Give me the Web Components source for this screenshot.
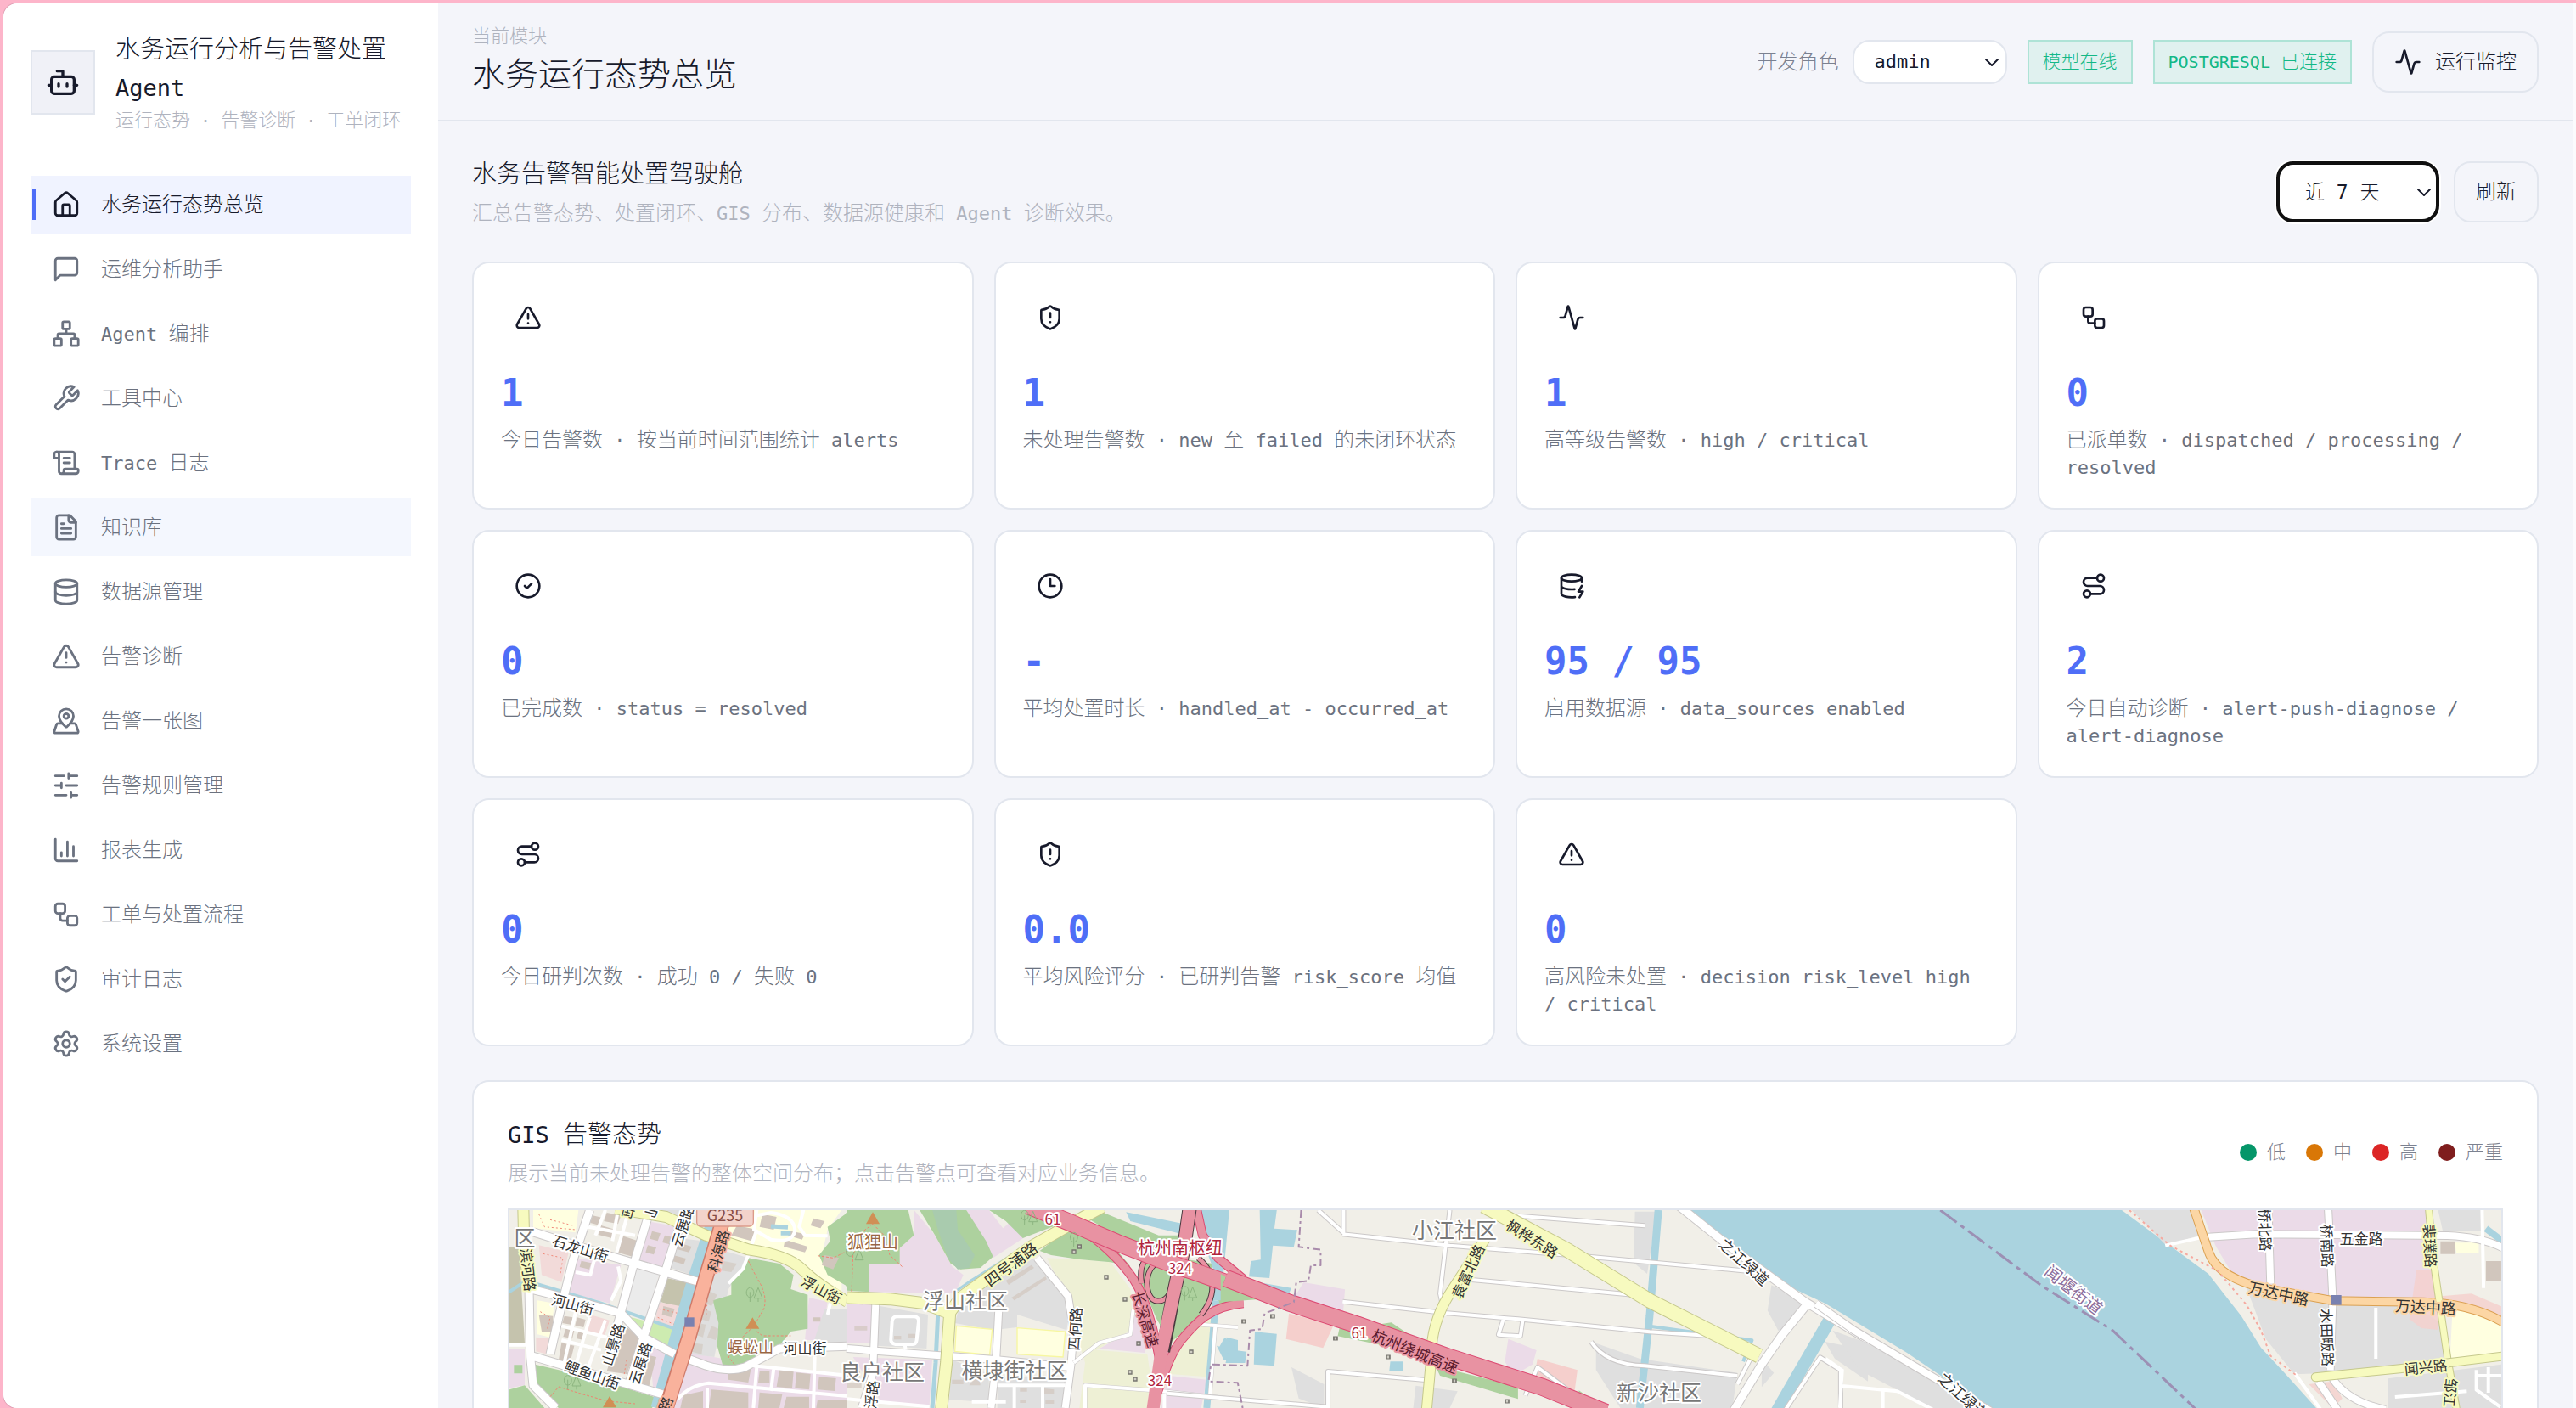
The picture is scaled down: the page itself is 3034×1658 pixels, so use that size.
<!DOCTYPE html>
<html lang="zh-CN">
<head>
<meta charset="utf-8">
<meta name="viewport" content="width=device-width, initial-scale=1">
<title>水务运行分析与告警处置 Agent</title>
<style>
  html, body { margin: 0; height: 100%; }
  body {
    --ink: #171a2b; --body: #6b7280; --muted: #afb3be; --line: #e2e6ee;
    --page: #f4f5fa; --accent: #4f6ef7;
    background: #fdb5ca; color: var(--ink); overflow: hidden;
    font: 300 24px/32px "DejaVu Sans Mono", "Noto Sans CJK SC", monospace;
  }
</style>
</head>
<body>
<water-app></water-app>

<template id="map-art">
  <svg class="map" viewBox="600 1425 2346 760" preserveAspectRatio="xMinYMin slice" role="img" aria-label="告警地图">
    <rect x="600" y="1425" width="2346" height="760" fill="#f1efe8"/>
    <path class="water" d="M1989 1425L2075 1500L2150 1535L2246 1593L2342 1658L2500 1800H2800L2728 1658L2691 1617L2663 1587L2640 1550L2601 1500L2556 1467L2499 1425Z"/>
    <!-- western blocks -->
    <g transform="matrix(.33333 0 0 .33333 598 1418)">
      <path class="lilac" d="M240 190L400 215L360 350L205 310ZM490 60L605 80L550 235L450 200ZM500 500L900 570L1200 600V720H520ZM1065 330L1130 345L1110 480L1050 480ZM5 510H60V640L5 650Z"/>
      <path class="grey" d="M600 120L690 130L650 250L560 220ZM1120 370H1200V490H1080ZM750 160L850 190L780 300L730 540L650 530L700 300ZM440 20H620L600 60Z"/>
      <path class="khaki" d="M5 150H40L60 490H5ZM565 262L650 280L620 370L540 345Z"/>
      <path fill="#ebebeb" d="M455 225L535 245L490 400L412 372Z"/>
      <path class="sand" d="M90 20H250L240 100L90 85ZM760 60L860 20H1180L1130 90L1110 180L1180 260V330L1100 260L960 175L780 130ZM105 340L165 350L150 470L105 460Z"/>
      <path class="pink" d="M110 145L215 170L190 275L120 250ZM530 345L610 360L590 440L522 418ZM290 390L360 410L340 470L280 450ZM100 470L160 475L140 530L100 520Z"/>
      <path class="green" d="M850 190L960 210L1010 250L1000 300L1060 320V440L1000 450L960 500L850 570H760L740 500L745 420L725 340L790 320V280ZM1200 30L1130 80L1140 130L1100 180L1130 250L1200 290ZM90 565L200 590L420 650L530 685L510 720H180L100 640ZM5 655L60 640L130 720H5ZM22 568H52V598H22Z"/>
      <path fill="#cdebb0" d="M420 395L590 440L565 520L480 470Z"/>
      <path class="bld" d="M400 110L460 130L440 185L388 170ZM350 30L400 40L390 70L340 60ZM300 40L335 48L325 75L292 66ZM330 75L380 90L368 120L320 108ZM510 95L540 103L530 130L502 122ZM555 110L580 116L572 142L546 135ZM495 145L525 153L516 178L487 170ZM600 135L650 150L640 170L595 158ZM585 180L630 192L622 212L578 200ZM260 200L295 208L288 230L254 222ZM400 420L470 470L420 600L350 590ZM480 530L525 540L495 660L450 640ZM200 395L230 400L222 425L193 420ZM245 400L275 408L268 435L238 428ZM205 440L235 447L228 475L196 468ZM250 450L275 458L268 480L242 474ZM190 490L235 500L220 560L180 550ZM110 390L160 395V450H120ZM810 75L880 90L860 130L790 110ZM900 35L950 45L940 90L890 80ZM1000 95L1050 105L1040 125L990 110ZM980 125L1060 150L1050 170L975 150ZM1080 50L1120 60L1105 85L1070 75ZM1120 180L1170 190L1150 230L1110 215ZM780 590L860 580L850 630L780 620ZM890 590H925V630H885ZM960 585L1010 590L1005 650L950 645ZM1020 595L1070 600L1065 655L1015 650ZM1100 610L1160 615L1155 660L1095 655ZM720 655L850 665V720H710ZM890 665L970 672L960 720H885ZM985 680H1065V720H975ZM1095 690H1200V720H1090ZM620 675L690 660V720H610ZM1080 400H1105V415H1080ZM550 360L590 370L580 400L545 390Z"/>
      <path class="bld" opacity=".6" d="M700 300L740 320L720 360L690 345ZM690 370L720 380L710 415L680 405ZM670 420L700 425L690 470L660 460ZM720 430L745 440L735 480L705 470ZM650 490L690 495L685 530L645 520ZM760 200L810 210L790 240L755 235Z"/>
      <path class="ln" stroke="#f08a7a" stroke-width="1" stroke-dasharray="2 3" d="M110 35L130 80L240 90M150 55L230 75M125 175L195 190L185 250M535 370L600 385M530 400L590 425M115 380L150 400L140 440M705 340L700 410M420 550L410 610"/>
      <path class="wl" stroke-width="13" d="M722 60L650 280L590 480L525 720"/>
      <path class="wl" stroke-width="4" d="M5 310L50 280L90 278L330 350L590 440"/>
      <path class="wl" stroke-width="5" d="M930 78L990 82M965 103L1000 103"/>
      <path class="case" stroke-width="11" d="M80 95L350 180L670 273M75 300L80 540L90 640L170 720M75 298L200 330L400 385L480 470L590 530M620 540L700 570Q780 595 840 575L960 510L1200 502M80 535L300 600L560 675M290 20L230 200L180 400L150 530M500 30L440 230L395 400L350 560M630 20L600 100L550 260L480 470L430 630"/>
      <path class="road" stroke-width="9" d="M80 95L350 180L670 273M75 300L80 540L90 640L170 720M75 298L200 330L400 385L480 470L590 530M620 540L700 570Q780 595 840 575L960 510L1200 502M80 535L300 600L560 675M290 20L230 200L180 400L150 530M500 30L440 230L395 400L350 560M630 20L600 100L550 260L480 470L430 630"/>
      <path class="road" stroke-width="4" d="M880 20L870 90L930 125Q1010 140 1015 90Q1010 40 930 30L880 40M1045 20L1030 80L1050 110L1130 112M880 90L850 180L830 230L780 280M860 570L1200 605M880 575L868 720M940 580L930 660M1085 540L1080 720M600 690Q640 640 710 632L900 650L1200 678M705 650V720M5 497H80M390 20L370 130M345 20L310 110M420 50L385 170M285 80L450 110M240 240L292 250L305 200M390 220L400 270L365 340M190 430L350 470M240 380L200 560M290 400L240 570M345 410L280 590M190 480L330 515M1130 390L1140 350"/>
      <path class="ycase" stroke-width="14" d="M380 15L560 45L700 110L850 160Q990 180 1040 230T1200 345M55 15L58 150L76 305"/>
      <path class="yroad" stroke-width="12" d="M380 15L560 45L700 110L850 160Q990 180 1040 230T1200 345M55 15L58 150L76 305"/>
      <path class="ln" stroke="#cf7c6b" stroke-width="18" d="M765 40L700 260L640 470L560 720"/>
      <path class="ln" stroke="#f9b29c" stroke-width="15" d="M765 40L700 260L640 470L560 725"/>
      <rect x="668" y="-20" width="200" height="98" rx="14" fill="#f3d3cb" stroke="#dc9a8a" stroke-width="4"/>
      <rect x="625" y="400" width="34" height="34" fill="#7981b0"/>
      <path class="trail" d="M850 200L880 260Q920 320 905 370L870 430L830 470L780 540L800 565M880 450L900 465H1000M1095 182L1150 190L1200 165M150 680L180 645L260 670L350 695L450 705"/>
      <path fill="#d08f55" d="M865 400L889 440H841ZM360 678L384 718H336Z"/>
      <path class="tree" d="M856 295a13 17 0 1 0 1 0M856 345V310M885 295L870 332H900ZM885 345V332M212 605a13 17 0 1 0 1 0M212 655V620M243 605L228 642H258ZM243 655V642"/>
      <rect x="26" y="86" width="62" height="60" fill="#fff" opacity=".7"/>
    </g>
    <!-- hill district and interchange -->
    <g transform="matrix(.33333 0 0 .33333 998 1418)">
      <path class="lilac" d="M235 20L310 110L370 220L410 250L380 315L75 310V210H180V160L235 110ZM420 20H500L550 85L590 50L630 115L515 190ZM0 350H90V490H0ZM20 540L300 550L290 710L120 700ZM1010 370L1060 500L1050 525L890 510L1000 450ZM1130 605L1270 620L1250 720H1110Z"/>
      <path class="grey" d="M115 360L285 390L280 510L105 500ZM660 190L790 350L775 445L600 390V435L515 445L380 420L400 350L470 300ZM370 550L500 600V700L360 690ZM530 610H770L760 720H530Z"/>
      <path class="sand" stroke="#f7f7a0" stroke-width="4" d="M385 430L512 442L503 532L380 520ZM600 437L770 450L762 540L600 530Z"/>
      <path fill="#eef0d5" d="M705 190L820 195L930 205L1000 300L1010 440L880 515L1060 530L1070 600L1060 720H820L840 560L790 400L770 320ZM1150 480L1290 400L1270 610L1140 600Z"/>
      <path class="green" d="M0 20H215L235 110L185 155V212H75V310L0 305ZM255 20H420L490 130L515 185L470 225L400 230L365 210L310 110ZM500 20H660L770 62L620 120L560 60ZM680 165L790 80L950 160L1000 220L930 205L820 195L720 180ZM850 50L900 28L1100 110L1180 110L1160 150L1030 160ZM1050 170L1290 210V340L1250 400L1140 490L1090 400L1040 280ZM1310 330L1380 310V330L1300 370Z"/>
      <path fill="#a9cbae" d="M300 20H385L390 90L450 180L430 225L390 230L355 190L320 90Z"/>
      <path class="water" d="M1245 20H1350L1320 340H1285L1300 250L1250 110ZM985 28L1190 70L1180 105L1000 60ZM1340 470L1380 480V560L1330 550L1305 500L1340 510Z"/>
      <path class="bld" opacity=".7" d="M560 270L650 215L660 225L570 285ZM580 330L700 255L705 265L590 340ZM165 465H190V478H165ZM215 458H240V472H215ZM25 432H70V446H25ZM370 620H410V636H370ZM430 640L465 600L470 640ZM610 650H635V662H610ZM690 650L730 655V670H690ZM610 690H630V702H610ZM700 690H730V705H700ZM0 590H45V610H0ZM0 630H50V650H0Z"/>
      <path class="wl" stroke-width="3" d="M770 62L440 268L380 310"/>
      <path class="wl" stroke-width="5" d="M320 390L312 560L300 720"/>
      <path class="wl" stroke-width="8" d="M1302 340L1270 720"/>
      <path class="case" stroke-width="10" d="M100 350L90 600L50 720M0 510L100 518L370 538L530 550L780 575M535 370L525 560L508 720M670 190L780 325L800 450L790 570L770 720"/>
      <path class="road" stroke-width="8" d="M100 350L90 600L50 720M0 510L100 518L370 538L530 550L780 575M535 370L525 560L508 720M670 190L780 325L800 450L790 570L770 720"/>
      <path class="case" stroke-width="5" d="M800 560L890 490L1000 460L1010 370M840 720V640L1110 660L1380 690M1300 430L1280 690M1250 425L1380 435"/>
      <path class="road" stroke-width="4" d="M175 397H235Q253 397 252 415L245 480Q244 497 225 495H170Q152 493 154 475L158 415Q160 397 175 397ZM203 495L206 515M800 560L890 490L1000 460L1010 370M840 720V640L1110 660L1380 690M0 688L290 715M530 640H770M590 640V720M690 640V720M440 698H560M1120 720V668M1300 430L1280 690M1250 425L1380 435"/>
      <path class="ycase" stroke-width="15" d="M0 330L150 335L270 350L360 385L400 330L650 150L790 70L900 10M362 385L350 560L332 725"/>
      <path class="yroad" stroke-width="13" d="M0 330L150 335L270 350L360 385L400 330L650 150L790 70L900 10M362 385L350 560L332 725"/>
      <path class="mcase" stroke-width="11" d="M860 110Q1000 220 1040 320T1105 560M1235 20L1255 110L1310 190L1400 265M1400 350C1280 360 1230 420 1180 480C1140 530 1120 600 1090 680"/>
      <path class="mroad" stroke-width="9" d="M860 110Q1000 220 1040 320T1105 560M1235 20L1255 110L1310 190L1400 265M1400 350C1280 360 1230 420 1180 480C1140 530 1120 600 1090 680"/>
      <path class="ln" stroke="#4b3a40" stroke-width="7" d="M1150 205C1040 170 1040 340 1095 342C1140 345 1150 290 1155 260M1040 280Q1025 190 1090 180M1240 190C1310 250 1300 330 1250 390"/>
      <path class="mroad" stroke-width="5" d="M1150 205C1040 170 1040 340 1095 342C1140 345 1150 290 1155 260M1040 280Q1025 190 1090 180M1240 190C1310 250 1300 330 1250 390"/>
      <path class="ln" stroke="#4b3a40" stroke-width="17" d="M1210 10L1190 150L1150 330L1115 520"/>
      <path class="mroad" stroke-width="15" d="M1210 10L1190 150L1150 330L1110 520L1080 725"/>
      <path class="mcase" stroke-width="21" d="M640 5L780 62L950 135L1130 205L1260 250L1400 300"/>
      <path class="mroad" stroke-width="19" d="M640 5L780 62L950 135L1130 205L1260 250L1400 300"/>
      <g fill="#cfcdc4" stroke="#77756f" stroke-width="4"><path d="M795 162h12v12h-12ZM814 144h12v12h-12ZM909 252h12v12h-12ZM975 330h12v12h-12ZM1023 486h12v12h-12ZM1209 516h12v12h-12ZM993 588h12v12h-12ZM1011 612h12v12h-12Z"/></g>
      <path class="trail" d="M90 70L50 100L20 180L15 310M90 70L130 110L150 180L195 222"/>
      <path fill="#d08f55" d="M90 28L114 70H66Z"/>
      <path class="tree" d="M626 22a13 17 0 1 0 1 0M626 72V40M656 25L641 62H671ZM656 72V62M800 100a13 17 0 1 0 1 0M800 150V118M1192 290a13 17 0 1 0 1 0M1192 340V308M1220 293L1205 330H1235ZM1220 342V330M10 150a13 17 0 1 0 1 0M42 160L27 197H57Z"/>
    </g>
    <!-- river plain -->
    <g transform="matrix(.574 0 0 .33333 1300 1400)">
      <path class="water" d="M320 75H355L350 140L397 145L390 205L347 200L340 315L298 310L302 255L322 250ZM310 505L355 512L350 625L308 620ZM248 525L265 545L270 570L293 575L290 615H250L255 575L235 565ZM310 328L385 350L380 370L305 350ZM588 610H615V642H586Z"/>
      <path class="lilac" d="M410 330L495 355L490 460L385 400ZM830 530L888 570L880 620L840 660L823 610Z"/>
      <path class="pink2" d="M380 440L472 480L450 562L374 530ZM890 600L972 640L965 730L880 690Z"/>
      <path class="green" d="M490 445L540 485L590 472L640 530L620 570L480 520ZM240 300L300 370L320 390L240 400ZM680 625L850 700V742L690 660ZM735 598L860 655L860 690L730 630ZM975 712L1018 765L970 755Z"/>
      <path class="grey" d="M1090 80H1135L1115 300L1087 260ZM1370 340L1442 400L1390 520L1362 430ZM1010 545L1100 600L1300 650L1290 774H1060L1010 640ZM640 695L726 715L710 774H635ZM385 630L452 690V774L400 740ZM1480 540L1568 570V680L1500 600ZM1350 600L1375 650L1350 700Z"/>
      <path class="wl" stroke-width="9" d="M1138 75L1120 450L1100 774"/>
      <path class="wl" stroke-width="15" d="M1492 455L1380 790"/>
      <path class="wl" stroke-width="4" d="M1120 485L1330 535L1312 610"/>
      <path class="case" stroke-width="6" d="M710 75L690 370L700 450M490 160L710 200L1000 240L1320 290M440 75L492 155V75M750 320L1090 375M490 398L700 438L850 460L1120 505L1250 520M1000 540Q1030 620 1110 625L1300 660M820 460L810 515L855 520L860 460M850 95L1110 130M460 774V645L660 675M130 722L460 770M1395 790L1470 595L1512 640V774M865 730L890 630L960 720M1330 590L1300 690"/>
      <path class="road" stroke-width="4" d="M710 75L690 370L700 450M490 160L710 200L1000 240L1320 290M440 75L492 155V75M750 320L1090 375M490 398L700 438L850 460L1120 505L1250 520M1000 540Q1030 620 1110 625L1300 660M820 460L810 515L855 520L860 460M850 95L1110 130M460 774V645L660 675M130 722L460 770M1395 790L1470 595L1512 640V774M865 730L890 630L960 720M1330 590L1300 690"/>
      <path class="case" stroke-width="11" d="M1180 60L1300 225L1440 400L1575 540M1442 410L1390 520L1350 620L1290 790"/>
      <path class="road" stroke-width="9" d="M1180 60L1300 225L1440 400L1575 540M1442 410L1390 520L1350 620L1290 790"/>
      <path class="ycase" stroke-width="18" d="M780 60L950 215L1120 395L1345 590"/>
      <path class="yroad" stroke-width="16" d="M780 60L950 215L1120 395L1345 590"/>
      <path class="ycase" stroke-width="13" d="M785 170L710 370Q670 480 672 600L662 790"/>
      <path class="yroad" stroke-width="11" d="M785 170L710 370Q670 480 672 600L662 790"/>
      <path class="mcase" stroke-width="21" d="M250 315L380 402L520 480L700 590L900 700L1030 790"/>
      <path class="mroad" stroke-width="19" d="M250 315L380 402L520 480L700 590L900 700L1030 790"/>
      <path class="ln" stroke="#a98bab" stroke-width="2" stroke-dasharray="9 4 3 4" d="M405 75L400 205L445 215V270H425L420 325L395 330L390 400L330 440L325 495L300 500L295 625L220 620L215 680L275 685L285 774"/>
      <path fill="#cfcdc4" stroke="#77756f" stroke-width="3" d="M284 462h7v12h-7ZM343 444h7v12h-7ZM472 522h7v12h-7ZM580 588h7v12h-7ZM716 672h7v12h-7ZM824 744h7v12h-7Z"/>
    </g>
    <!-- east bank -->
    <g transform="matrix(.5637 0 0 .33333 2150 1400)">
      <path class="lilac" d="M785 75H1260L1285 385L1060 380L930 340L850 300L815 200Z"/>
      <path class="grey" d="M640 75H765L790 160L712 200ZM880 350L1060 390L1230 410L1290 480L1300 600L1060 650L980 655L920 530ZM1280 75H1370V150H1290ZM1175 670L1412 620V774H1175ZM15 500L80 540L150 600L240 690L300 774H220L150 710L70 640Z"/>
      <path class="pink2" opacity=".8" d="M1235 285H1265L1275 380L1350 370L1412 415V450L1285 430L1280 498L1245 492L1220 460ZM1010 690L1060 680L1080 740L1060 774Z"/>
      <path class="sand" d="M1310 430H1370L1412 480V590L1305 600ZM1315 190H1365V225H1318Z"/>
      <path class="bld" d="M1285 185H1315V230H1285ZM1380 255H1412V325H1380Z"/>
      <path class="wl" stroke-width="8" d="M1380 140L1415 185"/>
      <path class="case" stroke-width="10" d="M800 170L900 160L1300 165Q1370 170 1415 208M925 60L930 335M1050 60L1060 390L1055 640M1060 670Q1090 750 1170 780M1030 680L1070 780M-20 405L60 500L230 670L345 785"/>
      <path class="road" stroke-width="8" d="M800 170L900 160L1300 165Q1370 170 1415 208M925 60L930 335M1050 60L1060 390L1055 640M1060 670Q1090 750 1170 780M1030 680L1070 780M-20 405L60 500L230 670L345 785"/>
      <path class="road" stroke-width="4" d="M710 200L790 170M980 650L1035 780M1372 75L1375 350M0 600L35 640L30 774M30 695L150 715L225 780M120 710V774M1190 735L1340 715M1360 640V710L1410 770M1385 630V720M1360 660H1412M1150 420V600"/>
      <path class="ln" stroke="#dba050" stroke-width="11" d="M768 60L800 220Q820 320 930 355L1060 395L1250 400Q1350 405 1420 475"/>
      <path class="ln" stroke="#fcd6a4" stroke-width="9" d="M768 60L800 220Q820 320 930 355L1060 395L1250 400Q1350 405 1420 475"/>
      <path class="ycase" stroke-width="9" d="M1260 60L1270 250L1300 600L1320 790"/>
      <path class="yroad" stroke-width="7" d="M1260 60L1270 250L1300 600L1320 790"/>
      <path class="ycase" stroke-width="11" stroke-linecap="round" d="M1024 665L1200 635L1420 590"/>
      <path class="yroad" stroke-width="9" stroke-linecap="round" d="M1024 665L1200 635L1420 590"/>
      <path class="ln" stroke="#9c90b4" stroke-width="3" stroke-dasharray="24 6 5 6" d="M240 75L450 340L600 500L775 780"/>
      <path class="ln" stroke="#f5aaa0" stroke-width="2" stroke-dasharray="3 4" d="M635 75L720 200L820 290L880 410L910 500L930 590L985 660"/>
      <path fill="#7981b0" d="M1057 375H1078V410H1057Z"/>
    </g>
    <g class="names"></g>
  </svg>
</template>

<script>
const ICONS = {
  bot: '<path d="M12 8V4H8"/><rect width="16" height="12" x="4" y="8" rx="2"/><path d="M2 14h2M20 14h2M15 13v2M9 13v2"/>',
  home: '<path d="M15 21v-8a1 1 0 0 0-1-1h-4a1 1 0 0 0-1 1v8"/><path d="M3 10a2 2 0 0 1 .709-1.528l7-6a2 2 0 0 1 2.582 0l7 6A2 2 0 0 1 21 10v9a2 2 0 0 1-2 2H5a2 2 0 0 1-2-2z"/>',
  chat: '<path d="M21 15a2 2 0 0 1-2 2H7l-4 4V5a2 2 0 0 1 2-2h14a2 2 0 0 1 2 2z"/>',
  network: '<rect x="16" y="16" width="6" height="6" rx="1"/><rect x="2" y="16" width="6" height="6" rx="1"/><rect x="9" y="2" width="6" height="6" rx="1"/><path d="M5 16v-3a1 1 0 0 1 1-1h12a1 1 0 0 1 1 1v3M12 12V8"/>',
  wrench: '<path d="M14.7 6.3a1 1 0 0 0 0 1.4l1.6 1.6a1 1 0 0 0 1.4 0l3.77-3.77a6 6 0 0 1-7.94 7.94l-6.91 6.91a2.12 2.12 0 0 1-3-3l6.91-6.91a6 6 0 0 1 7.94-7.94l-3.76 3.76z"/>',
  scroll: '<path d="M15 12h-5M15 8h-5M19 17V5a2 2 0 0 0-2-2H4"/><path d="M8 21h12a2 2 0 0 0 2-2v-1a1 1 0 0 0-1-1H11a1 1 0 0 0-1 1v1a2 2 0 1 1-4 0V5a2 2 0 1 0-4 0v2a1 1 0 0 0 1 1h3"/>',
  file: '<path d="M15 2H6a2 2 0 0 0-2 2v16a2 2 0 0 0 2 2h12a2 2 0 0 0 2-2V7Z"/><path d="M14 2v4a2 2 0 0 0 2 2h4M10 9H8M16 13H8M16 17H8"/>',
  database: '<ellipse cx="12" cy="5" rx="9" ry="3"/><path d="M3 5V19A9 3 0 0 0 21 19V5"/><path d="M3 12A9 3 0 0 0 21 12"/>',
  alert: '<path d="m21.73 18-8-14a2 2 0 0 0-3.48 0l-8 14A2 2 0 0 0 4 21h16a2 2 0 0 0 1.73-3"/><path d="M12 9v4M12 17h.01"/>',
  pin: '<path d="M18 8c0 3.613-3.869 7.429-5.393 8.795a1 1 0 0 1-1.214 0C9.87 15.429 6 11.613 6 8a6 6 0 0 1 12 0"/><circle cx="12" cy="8" r="2"/><path d="M8.714 14h-3.71a1 1 0 0 0-.948.683l-2.004 6A1 1 0 0 0 3 22h18a1 1 0 0 0 .948-1.316l-2-6a1 1 0 0 0-.949-.684h-3.712"/>',
  sliders: '<path d="M21 4h-7M10 4H3M21 12h-9M8 12H3M21 20h-5M12 20H3M14 2v4M8 10v4M16 18v4"/>',
  chart: '<path d="M3 3v16a2 2 0 0 0 2 2h16M18 17V9M13 17V5M8 17v-3"/>',
  workflow: '<rect width="8" height="8" x="3" y="3" rx="2"/><path d="M7 11v4a2 2 0 0 0 2 2h4"/><rect width="8" height="8" x="13" y="13" rx="2"/>',
  shieldCheck: '<path d="M20 13c0 5-3.5 7.5-7.66 8.95a1 1 0 0 1-.67-.01C7.5 20.5 4 18 4 13V6a1 1 0 0 1 1-1c2 0 4.5-1.2 6.24-2.72a1.17 1.17 0 0 1 1.52 0C14.51 3.81 17 5 19 5a1 1 0 0 1 1 1z"/><path d="m9 12 2 2 4-4"/>',
  shieldAlert: '<path d="M20 13c0 5-3.5 7.5-7.66 8.95a1 1 0 0 1-.67-.01C7.5 20.5 4 18 4 13V6a1 1 0 0 1 1-1c2 0 4.5-1.2 6.24-2.72a1.17 1.17 0 0 1 1.52 0C14.51 3.81 17 5 19 5a1 1 0 0 1 1 1z"/><path d="M12 8v4M12 16h.01"/>',
  gear: '<path d="M9.671 4.136a2.34 2.34 0 0 1 4.659 0 2.34 2.34 0 0 0 3.319 1.915 2.34 2.34 0 0 1 2.33 4.033 2.34 2.34 0 0 0 0 3.831 2.34 2.34 0 0 1-2.33 4.033 2.34 2.34 0 0 0-3.319 1.915 2.34 2.34 0 0 1-4.659 0 2.34 2.34 0 0 0-3.32-1.915 2.34 2.34 0 0 1-2.33-4.033 2.34 2.34 0 0 0 0-3.831A2.34 2.34 0 0 1 6.35 6.051a2.34 2.34 0 0 0 3.319-1.915"/><circle cx="12" cy="12" r="3"/>',
  activity: '<path d="M22 12h-2.48a2 2 0 0 0-1.93 1.46l-2.35 8.36a.25.25 0 0 1-.48 0L9.24 2.18a.25.25 0 0 0-.48 0l-2.35 8.36A2 2 0 0 1 4.49 12H2"/>',
  check: '<circle cx="12" cy="12" r="10"/><path d="m9 12 2 2 4-4"/>',
  clock: '<circle cx="12" cy="12" r="10"/><path d="M12 6v6h4"/>',
  databaseZap: '<ellipse cx="12" cy="5" rx="9" ry="3"/><path d="M3 5V19A9 3 0 0 0 15 21.84M21 5V8M21 12L18 17H22L19 22M3 12A9 3 0 0 0 14.59 14.87"/>',
  route: '<circle cx="6" cy="19" r="3"/><path d="M9 19h8.5a3.5 3.5 0 0 0 0-7h-11a3.5 3.5 0 0 1 0-7H15"/><circle cx="18" cy="5" r="3"/>',
  chevron: '<path d="m5 9 7 7 7-7"/>'
};

/* Latin words are set two pixels smaller than the Chinese text around them. */
const mix = s => s.replace(/[\x21-\x7e·]+ ?| /g, m => `<span class="l">${m}</span>`);
const BASE = `:host{display:block;box-sizing:border-box}*{box-sizing:border-box}
  .l{font-size:var(--l,22px);line-height:1}h1,h2,h3,p{margin:0;font-weight:inherit}
  .s24{font-size:24px;--l:22px}.s22{font-size:22px;--l:20px}.s29{font-size:29px;--l:27px}`;

class Base extends HTMLElement {
  connectedCallback() {
    if (this.shadowRoot) return;
    this.attachShadow({ mode: 'open' }).innerHTML = `<style>${BASE}${this.css()}</style>${this.html()}`;
  }
  css() { return ''; }
  at(n) { return this.getAttribute(n) || ''; }
}

customElements.define('ui-icon', class extends Base {
  css() { return `:host{flex:none;width:var(--icon,32px);height:var(--icon,32px)}svg{display:block;width:100%;height:100%}`; }
  html() { return `<svg viewBox="0 0 24 24" fill="none" stroke="currentColor" stroke-width="2" stroke-linecap="round" stroke-linejoin="round" aria-hidden="true">${ICONS[this.at('name')]}</svg>`; }
});

customElements.define('nav-item', class extends Base {
  css() { return `
    a{display:flex;align-items:center;gap:24px;height:68px;padding:0 25px;position:relative;color:var(--body);text-decoration:none;--icon:34px}
    :host([hover]) a{background:#f4f7fe}
    :host([active]) a{background:#f0f3ff;color:var(--ink)}
    :host([active]) a::before{content:"";position:absolute;left:2px;top:16px;bottom:16px;width:4px;background:var(--accent)}`; }
  html() { return `<a href="#" class="s24" ${this.hasAttribute('active') ? 'aria-current="page"' : ''}><ui-icon name="${this.at('icon')}"></ui-icon><span>${mix(this.at('label'))}</span></a>`; }
});

customElements.define('side-bar', class extends Base {
  css() { return `
    :host{background:#fff;padding:32px;border-radius:16px 0 0 16px}
    .brand{display:flex;align-items:center;gap:24px;margin-bottom:49px}
    .logo{flex:none;display:grid;place-items:center;width:76px;height:76px;border:2px solid var(--line);background:#f0f1f7;--icon:40px}
    h1{line-height:45px}p{line-height:32px;color:var(--muted);white-space:nowrap}
    nav{display:flex;flex-direction:column;gap:8px}`; }
  html() {
    const items = [['home','水务运行态势总览','active'],['chat','运维分析助手'],['network','Agent 编排'],['wrench','工具中心'],['scroll','Trace 日志'],['file','知识库','hover'],['database','数据源管理'],['alert','告警诊断'],['pin','告警一张图'],['sliders','告警规则管理'],['chart','报表生成'],['workflow','工单与处置流程'],['shieldCheck','审计日志'],['gear','系统设置']];
    return `<div class="brand"><div class="logo"><ui-icon name="bot"></ui-icon></div>
      <div><h1 class="s29">${mix('水务运行分析与告警处置 Agent')}</h1><p class="s22">${mix('运行态势 · 告警诊断 · 工单闭环')}</p></div></div>
      <nav>${items.map(([i, l, s = '']) => `<nav-item icon="${i}" label="${l}" ${s}></nav-item>`).join('')}</nav>`;
  }
});

customElements.define('select-box', class extends Base {
  css() { return `
    :host{display:inline-block}
    .row{display:flex;align-items:center;gap:16px}
    label{color:#7b8190}
    .box{display:grid;align-items:center;color:var(--ink);--icon:24px}
    .box>*{grid-area:1/1}
    ui-icon{justify-self:end;margin-right:6px;pointer-events:none}
    select{appearance:none;width:182px;height:52px;padding:0 24px;border:2px solid var(--line);border-radius:20px;background:#fff;color:inherit;font:inherit;font-size:22px;outline:none}
    :host([focused]) select{width:192px;height:72px;padding:0 30px;border:4px solid #101010;font-size:23px;box-shadow:0 0 0 2px #fff}`; }
  html() {
    const l = this.at('label');
    return `<div class="row">${l ? `<label for="s" class="s24">${l}</label>` : ''}
      <span class="box"><select id="s" aria-label="${l || '时间范围'}"><option>${this.at('value')}</option></select><ui-icon name="chevron"></ui-icon></span></div>`;
  }
});

customElements.define('status-tag', class extends Base {
  css() { return `:host{padding:0 16px;border:2px solid #aee3d6;background:#e0f1ef;color:#14b886;font-size:22px;line-height:48px;--l:20px;white-space:nowrap}`; }
  html() { return mix(this.at('text')); }
});

customElements.define('ui-button', class extends Base {
  css() { return `button{display:flex;align-items:center;gap:16px;height:72px;padding:0 24px;border:2px solid var(--line);border-radius:20px;background:none;color:var(--ink);font:inherit;font-size:24px}`; }
  html() { return `<button type="button">${this.at('icon') ? `<ui-icon name="${this.at('icon')}"></ui-icon>` : ''}<span><slot></slot></span></button>`; }
});

customElements.define('top-bar', class extends Base {
  css() { return `
    :host{display:flex;align-items:center;justify-content:space-between;min-height:139px;padding:0 40px;border-bottom:2px solid var(--line)}
    p{line-height:30px;color:var(--muted)}h2{font-size:39px;line-height:60px}
    .tools{display:flex;align-items:center;gap:24px}`; }
  html() { return `<div><p class="s22">当前模块</p><h2>水务运行态势总览</h2></div>
    <div class="tools"><select-box label="开发角色" value="admin"></select-box><status-tag text="模型在线"></status-tag><status-tag text="POSTGRESQL 已连接"></status-tag><ui-button icon="activity">运行监控</ui-button></div>`; }
});

customElements.define('section-head', class extends Base {
  css() { return `
    :host{display:flex;align-items:center;justify-content:space-between}
    h3{line-height:45px;margin-bottom:6px}p{line-height:34px;color:var(--muted)}`; }
  html() { return `<div><h3 class="s29">${mix(this.at('title'))}</h3><p class="s24">${mix(this.at('note'))}</p></div><slot></slot>`; }
});

customElements.define('metric-card', class extends Base {
  css() { return `
    :host{padding:32px;border:2px solid var(--line);border-radius:20px;background:#fff}
    .icon{display:grid;place-items:center;width:64px;height:64px}
    .v{margin-top:32px;font-size:44px;line-height:50px;font-weight:700;color:var(--accent)}
    p{margin-top:14px;line-height:32px;color:var(--body)}`; }
  html() { return `<div class="icon"><ui-icon name="${this.at('icon')}"></ui-icon></div><div class="v">${this.at('value')}</div><p class="s24">${mix(this.at('label'))}</p>`; }
});

customElements.define('map-legend', class extends Base {
  css() { return `:host{display:flex;gap:24px;color:#7b8190}span{display:flex;align-items:center;gap:12px}i{width:20px;height:20px;border-radius:50%;background:var(--c)}`; }
  html() { return [['#059669','低'],['#d97706','中'],['#dc2626','高'],['#7f1d1d','严重']].map(([c, t]) => `<span class="s22"><i style="--c:${c}"></i>${t}</span>`).join(''); }
});

const DARK = '#333', GREY = '#777', PEAK = '#996644', RED = '#b0243b';
const NAMES = [
  ['石龙山街',684,1469,17,17],['河山街',675,1535,17,15],['鲤鱼山街',698,1618,17,20],['山景路',721,1583,17,-72],['云展路',753,1605,17,-72],['云展路',803,1443,17,-72],
  ['科海路',845,1473,17,-74,DARK,'#f9b29c'],['滨河路',623,1495,17,84,DARK,'#f7fabf'],['街',740,1425,17,15,DARK,'#f7fabf'],['马',768,1424,17,15],
  ['蜈蚣山',884,1585,18,0,PEAK],['河山街',948,1586,17,0],['浮山街',968,1518,17,28,DARK,'#f7fabf'],['狐狸山',1028,1461,20,0,PEAK],
  ['四号浦路',1190,1488,18,-37,DARK,'#f7fabf'],['四何路',1265,1565,17,-86],['浮路',1026,1642,17,-83],
  ['长深高速',1350,1553,17,73,'#5a1a2c','#e892a2'],['杭州南枢纽',1390,1468,20,0,RED],['324',1390,1492,17,0,RED],['324',1366,1624,17,0,RED],['61',1240,1434,17,0,RED],['61',1601,1568,17,0,RED],
  ['浮山社区',1137,1530,25,0,GREY],['良户社区',1039,1614,25,0,GREY],['横埭街社区',1195,1612,25,0,GREY],['小江社区',1713,1447,25,0,GREY],['新沙社区',1954,1638,25,0,GREY],['区',618,1456,25,0,GREY],
  ['杭州绕城高速',1667,1590,18,22,'#5a1a2c','#e892a2'],['袁富北路',1728,1497,17,-65,DARK,'#f7fabf'],['枫桦东路',1805,1458,17,32,DARK,'#f7fabf'],
  ['之江绿道',2055,1485,18,42],['之江绿道',2313,1643,18,42],['闻堰街道',2443,1518,20,38,'#8d6f9c'],
  ['桥北路',2669,1448,17,88],['桥南路',2742,1467,17,88],['水田畈路',2742,1575,17,88],['五金路',2781,1457,17,0],['万达中路',2684,1522,18,12,DARK,'#fcd6a4'],['万达中路',2857,1538,18,3,DARK,'#fcd6a4'],
  ['裴璞路',2863,1467,17,87,DARK,'#f7fabf'],['闻兴路',2857,1609,17,-6,DARK,'#f7fabf'],['邹江',2887,1640,17,95,DARK,'#f7fabf'],['G235',854,1430,18,0,'#854b45','#f3d3cb'],['路',783,1653,17,-70,DARK,'#f9b29c']
];

customElements.define('gis-map', class extends Base {
  css() { return `
    :host{border:2px solid var(--line);overflow:hidden}
    .map{display:block;width:100%;height:auto}
    .names text{font-family:"Noto Sans CJK SC",sans-serif;font-weight:400;text-anchor:middle;dominant-baseline:central;paint-order:stroke;stroke-width:4px;stroke-linejoin:round}
    .water{fill:#aad3df}.lilac{fill:#ebdbe8}.grey{fill:#dfdfdf}.khaki{fill:#c5c3ad}.sand{fill:#ffffe0}.pink{fill:#f2dad9}.pink2{fill:#f5cfcc}.green{fill:#add19e}.bld{fill:#d1c6bd}
    .wl,.case,.road,.ycase,.yroad,.mcase,.mroad,.ln,.trail,.tree{fill:none;vector-effect:non-scaling-stroke;stroke-linejoin:round}
    .wl{stroke:#aad3df}.case{stroke:#cbc8c8}.road{stroke:#fff}.ycase{stroke:#c5c88c}.yroad{stroke:#f7fabf}.mcase{stroke:#dc4a72}.mroad{stroke:#e892a2}
    .trail{stroke:#ee8470;stroke-width:1px;stroke-dasharray:3 2}.tree{stroke:#8db580;stroke-width:1px}`; }
  html() { return ''; }
  connectedCallback() {
    super.connectedCallback();
    this.shadowRoot.append(document.getElementById('map-art').content.cloneNode(true));
    this.shadowRoot.querySelector('.names').innerHTML = NAMES.map(([t, x, y, s, a, c = DARK, h = '#fff']) =>
      `<text x="${x}" y="${y}" font-size="${s}" fill="${c}" stroke="${h}" transform="rotate(${a} ${x} ${y})">${t}</text>`).join('');
  }
});

customElements.define('gis-panel', class extends Base {
  css() { return `:host{padding:40px;border:2px solid var(--line);border-radius:20px;background:#fff}gis-map{margin-top:24px}`; }
  html() { return `<section-head title="GIS 告警态势" note="展示当前未处理告警的整体空间分布；点击告警点可查看对应业务信息。"><map-legend></map-legend></section-head><gis-map></gis-map>`; }
});

customElements.define('dashboard-view', class extends Base {
  css() { return `
    :host{padding:40px}
    .actions{display:flex;gap:17px}
    .grid{display:grid;grid-template-columns:repeat(4,minmax(0,1fr));gap:24px;margin:40px 0}`; }
  html() {
    const cards = [['alert','1','今日告警数 · 按当前时间范围统计 alerts'],['shieldAlert','1','未处理告警数 · new 至 failed 的未闭环状态'],['activity','1','高等级告警数 · high / critical'],['workflow','0','已派单数 · dispatched / processing / resolved'],['check','0','已完成数 · status = resolved'],['clock','-','平均处置时长 · handled_at - occurred_at'],['databaseZap','95 / 95','启用数据源 · data_sources enabled'],['route','2','今日自动诊断 · alert-push-diagnose / alert-diagnose'],['route','0','今日研判次数 · 成功 0 / 失败 0'],['shieldAlert','0.0','平均风险评分 · 已研判告警 risk_score 均值'],['alert','0','高风险未处置 · decision risk_level high / critical']];
    return `<section-head title="水务告警智能处置驾驶舱" note="汇总告警态势、处置闭环、GIS 分布、数据源健康和 Agent 诊断效果。"><div class="actions"><select-box focused value="近 7 天"></select-box><ui-button>刷新</ui-button></div></section-head>
      <div class="grid">${cards.map(([i, v, l]) => `<metric-card icon="${i}" value="${v}" label="${l}"></metric-card>`).join('')}</div>
      <gis-panel></gis-panel>`;
  }
});

customElements.define('water-app', class extends Base {
  css() { return `
    :host{height:100vh;padding:4px 0 0 4px}
    .shell{display:grid;grid-template-columns:512px minmax(0,1fr);height:100%;border-radius:16px 0 0 16px;background:var(--page);box-shadow:0 0 0 1px #e3a3b7;overflow:hidden}
    main{overflow:hidden;border-right:4px solid #fbfbfd}`; }
  html() { return `<div class="shell"><side-bar></side-bar><main><top-bar></top-bar><dashboard-view></dashboard-view></main></div>`; }
});
</script>
</body>
</html>
